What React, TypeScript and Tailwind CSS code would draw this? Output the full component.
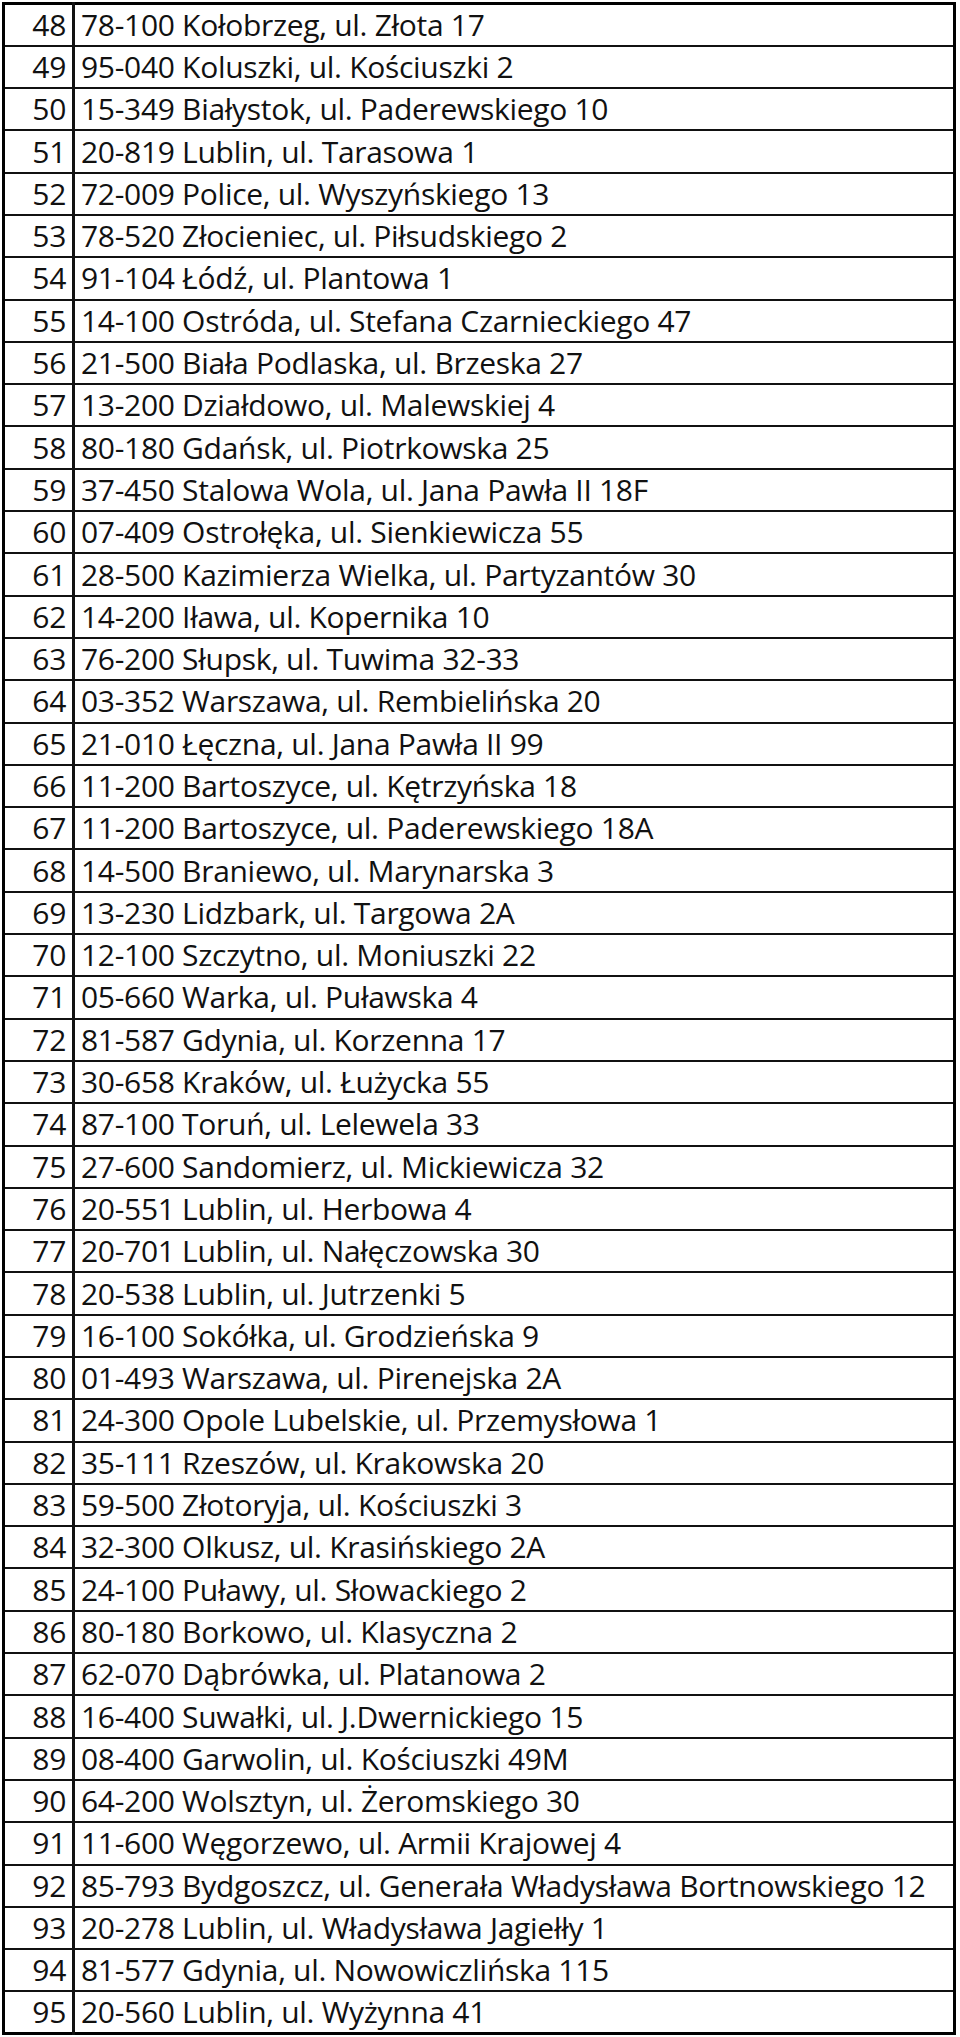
const rows: [number, string][] = [
  [48, '78-100 Kołobrzeg, ul. Złota 17'],
  [49, '95-040 Koluszki, ul. Kościuszki 2'],
  [50, '15-349 Białystok, ul. Paderewskiego 10'],
  [51, '20-819 Lublin, ul. Tarasowa 1'],
  [52, '72-009 Police, ul. Wyszyńskiego 13'],
  [53, '78-520 Złocieniec, ul. Piłsudskiego 2'],
  [54, '91-104 Łódź, ul. Plantowa 1'],
  [55, '14-100 Ostróda, ul. Stefana Czarnieckiego 47'],
  [56, '21-500 Biała Podlaska, ul. Brzeska 27'],
  [57, '13-200 Działdowo, ul. Malewskiej 4'],
  [58, '80-180 Gdańsk, ul. Piotrkowska 25'],
  [59, '37-450 Stalowa Wola, ul. Jana Pawła II 18F'],
  [60, '07-409 Ostrołęka, ul. Sienkiewicza 55'],
  [61, '28-500 Kazimierza Wielka, ul. Partyzantów 30'],
  [62, '14-200 Iława, ul. Kopernika 10'],
  [63, '76-200 Słupsk, ul. Tuwima 32-33'],
  [64, '03-352 Warszawa, ul. Rembielińska 20'],
  [65, '21-010 Łęczna, ul. Jana Pawła II 99'],
  [66, '11-200 Bartoszyce, ul. Kętrzyńska 18'],
  [67, '11-200 Bartoszyce, ul. Paderewskiego 18A'],
  [68, '14-500 Braniewo, ul. Marynarska 3'],
  [69, '13-230 Lidzbark, ul. Targowa 2A'],
  [70, '12-100 Szczytno, ul. Moniuszki 22'],
  [71, '05-660 Warka, ul. Puławska 4'],
  [72, '81-587 Gdynia, ul. Korzenna 17'],
  [73, '30-658 Kraków, ul. Łużycka 55'],
  [74, '87-100 Toruń, ul. Lelewela 33'],
  [75, '27-600 Sandomierz, ul. Mickiewicza 32'],
  [76, '20-551 Lublin, ul. Herbowa 4'],
  [77, '20-701 Lublin, ul. Nałęczowska 30'],
  [78, '20-538 Lublin, ul. Jutrzenki 5'],
  [79, '16-100 Sokółka, ul. Grodzieńska 9'],
  [80, '01-493 Warszawa, ul. Pirenejska 2A'],
  [81, '24-300 Opole Lubelskie, ul. Przemysłowa 1'],
  [82, '35-111 Rzeszów, ul. Krakowska 20'],
  [83, '59-500 Złotoryja, ul. Kościuszki 3'],
  [84, '32-300 Olkusz, ul. Krasińskiego 2A'],
  [85, '24-100 Puławy, ul. Słowackiego 2'],
  [86, '80-180 Borkowo, ul. Klasyczna 2'],
  [87, '62-070 Dąbrówka, ul. Platanowa 2'],
  [88, '16-400 Suwałki, ul. J.Dwernickiego 15'],
  [89, '08-400 Garwolin, ul. Kościuszki 49M'],
  [90, '64-200 Wolsztyn, ul. Żeromskiego 30'],
  [91, '11-600 Węgorzewo, ul. Armii Krajowej 4'],
  [92, '85-793 Bydgoszcz, ul. Generała Władysława Bortnowskiego 12'],
  [93, '20-278 Lublin, ul. Władysława Jagiełły 1'],
  [94, '81-577 Gdynia, ul. Nowowiczlińska 115'],
  [95, '20-560 Lublin, ul. Wyżynna 41'],
]

export default function App() {
  return (
    <div className="w-[960px] bg-white pl-[2px] pt-[2px] pb-[4px] font-['Open_Sans',sans-serif] text-[#111]">
      <table className="w-[954px] border-collapse border-[3px] border-black">
        <tbody>
          {rows.map(([n, addr]) => (
            <tr key={n} className="h-[42.3px]">
              <td className="w-[70px] border-[2px] border-[#111] border-r-[3px] pr-[6px] text-right align-middle text-[30px] leading-none tracking-[-0.3px]">
                {n}
              </td>
              <td className="border-[2px] border-[#111] pl-[6px] align-middle text-[30px] leading-none tracking-[-0.3px] whitespace-nowrap">
                {addr}
              </td>
            </tr>
          ))}
        </tbody>
      </table>
    </div>
  )
}
